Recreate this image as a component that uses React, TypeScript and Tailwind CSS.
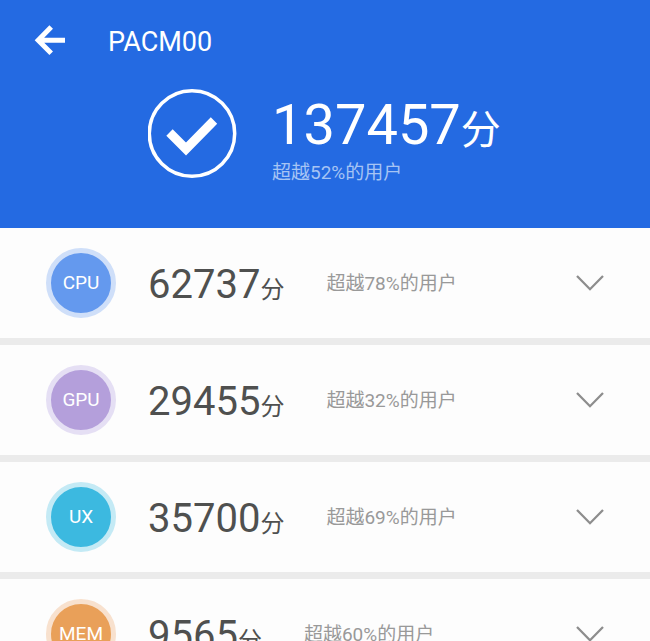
import React from "react";

type Score = {
  name: string;
  score: number;
  percent: number;
  color: string;
};

const scores: Score[] = [
  { name: "CPU", score: 62737, percent: 78, color: "bg-[#6499ee] border-[#cfdff9]" },
  { name: "GPU", score: 29455, percent: 32, color: "bg-[#b49fdb] border-[#e5dff4]" },
  { name: "UX", score: 35700, percent: 69, color: "bg-[#3cb9e0] border-[#c4eaf5]" },
  { name: "MEM", score: 9565, percent: 60, color: "bg-[#e9a059] border-[#f8e1ce]" },
];

const Header = () => {
  return (
    <header className="h-[228px] bg-[#246ae2] text-white">
      <div className="flex items-center gap-10 pl-8 pt-[18px]">
        <button type="button" aria-label="返回" className="p-0.5">
          <svg width="32" height="32" viewBox="0 0 32 32" fill="none" stroke="currentColor" strokeWidth="5">
            <path d="M17.2 3 4.2 16.2 17.2 29.3M4.5 16.2H31" />
          </svg>
        </button>
        <h1 className="pt-1 text-[27px] leading-10">PACM00</h1>
      </div>

      <div className="flex gap-[34px] pl-[148px] pt-[27px]">
        <svg width="90" height="90" viewBox="0 0 90 90" fill="none" stroke="currentColor">
          <circle cx="44" cy="44.5" r="42.7" strokeWidth="3.5" />
          <path d="M21.5 43.5 38 60 66 31.5" strokeWidth="9" />
        </svg>
        <div>
          <p className="text-[56px] leading-[72px]">
            137457<span className="text-[40px] leading-none">分</span>
          </p>
          <p className="text-[19px] leading-6 text-[#a6c4f4]">超越52%的用户</p>
        </div>
      </div>
    </header>
  );
};

const ScoreRow = ({ name, score, percent, color }: Score) => {
  return (
    <li className="flex h-[117px] items-center border-b-[7px] border-[#ebebeb] px-[46px]">
      <span
        className={`flex size-[70px] shrink-0 items-center justify-center rounded-full border-5 text-[19px] text-white ${color}`}
      >
        {name}
      </span>
      <p className="ml-8 pt-1 text-[40px] leading-[48px] text-[#4f504f]">
        {score}
        <span className="text-2xl leading-none">分</span>
      </p>
      <p className="ml-[42px] pt-0.5 text-[19px] leading-6 text-[#999999]">超越{percent}%的用户</p>
      <button type="button" aria-label={`展开 ${name}`} className="ml-auto text-[#8d8d8d]">
        <svg width="28" height="18" viewBox="0 0 28 18" fill="none" stroke="currentColor" strokeWidth="2.3">
          <path d="M1 2 14 15.2 27 2" />
        </svg>
      </button>
    </li>
  );
};

const App = () => {
  return (
    <div className="h-screen overflow-hidden bg-[#fdfdfd] font-['Roboto','Noto_Sans_CJK_SC',sans-serif]">
      <Header />
      <ul>
        {scores.map((item) => (
          <ScoreRow key={item.name} {...item} />
        ))}
      </ul>
    </div>
  );
};

export default App;
